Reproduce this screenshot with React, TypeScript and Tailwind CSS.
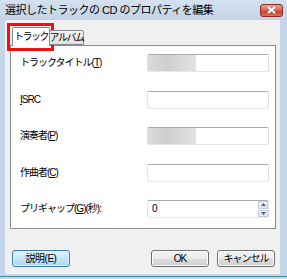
const font = { fontFamily: '"Liberation Sans", "Noto Sans CJK JP", sans-serif' };

function Mn({ k }: { k: string }) {
  return (
    <>
      (<span className="underline underline-offset-1">{k}</span>)
    </>
  );
}

function Field({ blur, children }: { blur?: boolean; children?: React.ReactNode }) {
  return (
    <div className="relative w-[122px] h-[18px] border border-[#abadb3] border-l-[#e2e3ea] border-r-[#dbdfe6] border-b-[#e3e9ef] rounded-[2px] bg-white flex items-center">
      {blur && (
        <div className="absolute left-0 top-0 w-[48px] h-[16px] bg-[linear-gradient(90deg,#dadada,#cfcfcf_40%,#d6d6d6_60%,#e2e2e2)]" />
      )}
      {children}
    </div>
  );
}

function Row({ label, children }: { label: React.ReactNode; children: React.ReactNode }) {
  return (
    <div className="flex items-center justify-between h-[18px] pl-[9px] pr-[6px]">
      <span className="text-[10px] text-black leading-none tracking-[-1px] whitespace-nowrap">{label}</span>
      {children}
    </div>
  );
}

function Btn({ children, focus }: { children: React.ReactNode; focus?: boolean }) {
  return (
    <button
      className={
        focus
          ? "w-[58px] h-[17px] rounded-[3px] border border-[#3c7fb1] bg-[linear-gradient(#e5f4fc,#c4e5f6_50%,#a9d9f2)] text-[10px] text-black leading-none whitespace-nowrap tracking-[-0.5px] shadow-[inset_0_0_0_1px_#d8f0fb]"
          : "w-[58px] h-[17px] rounded-[3px] border border-[#707070] bg-[linear-gradient(#f2f2f2,#ebebeb_50%,#dddddd_51%,#cfcfcf)] text-[10px] text-black leading-none whitespace-nowrap tracking-[-1px] shadow-[inset_0_0_0_1px_#fcfcfc]"
      }
    >
      {children}
    </button>
  );
}

export default function App() {
  return (
    <div className="w-[287px] h-[279px] flex flex-col bg-[#c5d6e8] overflow-hidden" style={font}>
      {/* title bar */}
      <div className="h-[20px] flex items-center justify-between pl-[5px] pr-[4px] bg-[linear-gradient(#d4e1ef,#c3d4e7)]">
        <span className="text-[11px] text-black tracking-[-0.5px] leading-none whitespace-nowrap">
          選択したトラックの&nbsp;CD&nbsp;のプロパティを編集
        </span>
        <div className="w-[23px] h-[13px] rounded-[3px] border border-[#8a2c20] bg-[linear-gradient(#e8a396,#d7614c_50%,#c0392a_51%,#d9725c)] flex items-center justify-center">
          <svg width="9" height="8" viewBox="0 0 9 8">
            <path d="M1 1 L8 7 M8 1 L1 7" stroke="#fff" strokeWidth="2" />
          </svg>
        </div>
      </div>

      {/* body */}
      <div className="ml-[5px] mr-[7px] h-[254px] bg-[#f0f0f0] flex flex-col pt-[7px] px-[5px] relative">
        {/* tabs */}
        <div className="flex items-end h-[19px] pl-[2px] relative z-10">
          <div className="w-[38px] h-[19px] bg-white border border-b-0 border-[#898c95] rounded-t-[2px] flex items-center justify-center text-[10px] leading-none tracking-[-1.5px] whitespace-nowrap">
            トラック
          </div>
          <div className="w-[35px] h-[15px] mb-[1px] -ml-px border border-[#898c95] rounded-t-[2px] bg-[linear-gradient(#f3f3f3,#e1e1e1)] flex items-center justify-center text-[10px] leading-none tracking-[-1.5px] whitespace-nowrap">
            アルバム
          </div>
        </div>

        {/* panel */}
        <div className="-mt-px w-[266px] h-[184px] border border-[#898c95] bg-white flex flex-col gap-[18.5px] pt-[8px]">
          <Row label={<>トラックタイトル<Mn k="T" /></>}>
            <Field blur />
          </Row>
          <Row label={<><span className="underline underline-offset-1">I</span>SRC</>}>
            <Field />
          </Row>
          <Row label={<>演奏者<Mn k="P" /></>}>
            <Field blur />
          </Row>
          <Row label={<>作曲者<Mn k="C" /></>}>
            <Field />
          </Row>
          <Row label={<>プリギャップ<Mn k="G" />(秒):</>}>
            <Field>
              <span className="pl-[4px] text-[10px] leading-none text-black">0</span>
              <div className="absolute right-0 top-0 w-[10px] h-[16px] flex flex-col gap-px">
                <div className="flex-1 border border-[#c7ced8] bg-[linear-gradient(#f4f6f9,#dde3ea)] flex items-center justify-center">
                  <svg width="5" height="3" viewBox="0 0 5 3"><path d="M0 3 L2.5 0 L5 3 Z" fill="#4d6185" /></svg>
                </div>
                <div className="flex-1 border border-[#c7ced8] bg-[linear-gradient(#f4f6f9,#dde3ea)] flex items-center justify-center">
                  <svg width="5" height="3" viewBox="0 0 5 3"><path d="M0 0 L2.5 3 L5 0 Z" fill="#4d6185" /></svg>
                </div>
              </div>
            </Field>
          </Row>
        </div>

        {/* buttons */}
        <div className="mt-[21px] flex items-center pl-[2px]">
          <Btn focus>説明(E)</Btn>
          <div className="ml-auto flex gap-[8px]">
            <Btn>OK</Btn>
            <Btn>キャンセル</Btn>
          </div>
        </div>

        {/* red highlight */}
        <div className="absolute left-[2px] top-[3px] w-[47px] h-[28px] border-[3px] border-[#ee1111]" />
      </div>

      <div className="mt-auto h-[3px] border-t border-[#3e8c9c] bg-[#c5d6e8]" />
    </div>
  );
}
